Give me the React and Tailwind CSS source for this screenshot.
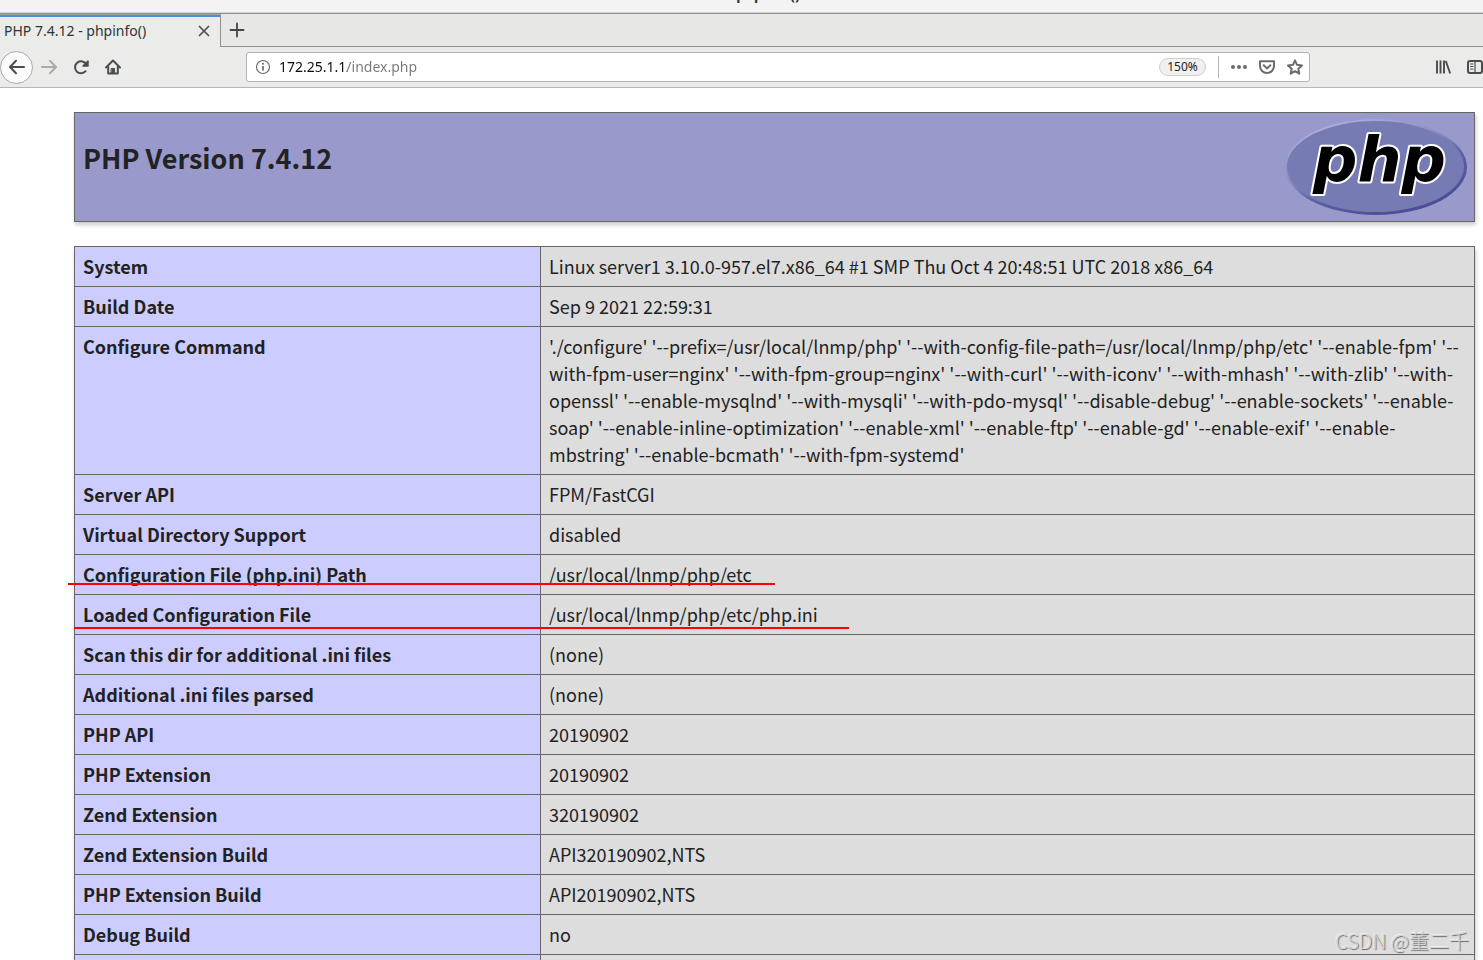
const rows = [
  ["System", "Linux server1 3.10.0-957.el7.x86_64 #1 SMP Thu Oct 4 20:48:51 UTC 2018 x86_64"],
  ["Build Date", "Sep 9 2021 22:59:31"],
  [
    "Configure Command",
    "'./configure' '--prefix=/usr/local/lnmp/php' '--with-config-file-path=/usr/local/lnmp/php/etc' '--enable-fpm' '--with-fpm-user=nginx' '--with-fpm-group=nginx' '--with-curl' '--with-iconv' '--with-mhash' '--with-zlib' '--with-openssl' '--enable-mysqlnd' '--with-mysqli' '--with-pdo-mysql' '--disable-debug' '--enable-sockets' '--enable-soap' '--enable-inline-optimization' '--enable-xml' '--enable-ftp' '--enable-gd' '--enable-exif' '--enable-mbstring' '--enable-bcmath' '--with-fpm-systemd'",
  ],
  ["Server API", "FPM/FastCGI"],
  ["Virtual Directory Support", "disabled"],
  ["Configuration File (php.ini) Path", "/usr/local/lnmp/php/etc", "-left-[7px] top-7 w-[707px]"],
  ["Loaded Configuration File", "/usr/local/lnmp/php/etc/php.ini", "-left-px top-8 w-[775px]"],
  ["Scan this dir for additional .ini files", "(none)"],
  ["Additional .ini files parsed", "(none)"],
  ["PHP API", "20190902"],
  ["PHP Extension", "20190902"],
  ["Zend Extension", "320190902"],
  ["Zend Extension Build", "API320190902,NTS"],
  ["PHP Extension Build", "API20190902,NTS"],
  ["Debug Build", "no"],
  ["", ""],
];

function Icon({ children, className = "" }) {
  return (
    <svg viewBox="0 0 16 16" className={`size-4 shrink-0 ${className}`} fill="none" stroke="currentColor" strokeWidth="2" strokeLinecap="round" strokeLinejoin="round" aria-hidden="true">
      {children}
    </svg>
  );
}

function TitleBar() {
  return (
    <div className="flex h-[13px] items-start border-b border-[#d6d6d4] bg-[#f3f3f3]">
      <div className="flex h-[5px] w-full items-end justify-center overflow-hidden pl-[53px] text-sm leading-5 font-bold text-[#2e3436]">
        <span>phpinfo()</span>
      </div>
    </div>
  );
}

function TabStrip() {
  return (
    <div className="flex h-[34px] border-t border-[#8f8f8d] bg-[#e7e7e5]">
      <div className="flex w-[221px] flex-col border-t border-r border-t-[#a5a5a3] border-r-[#8f8f8d] bg-[#ebebe9]">
        <div className="h-0.5 bg-[#4a90d9]" />
        <div className="flex items-center justify-between pt-1 pr-2 pl-1">
          <span className="text-sm leading-5 text-[#2e3436]">PHP 7.4.12 - phpinfo()</span>
          <button type="button" aria-label="Close tab" className="text-[#4b5154]">
            <Icon>
              <path d="M3.5 3.5l9 9M12.5 3.5l-9 9" strokeWidth="1.7" />
            </Icon>
          </button>
        </div>
      </div>
      <div className="flex flex-1 items-center border-b border-[#8f8f8d] pl-2">
        <button type="button" aria-label="New tab" className="text-[#3f4648]">
          <Icon>
            <path d="M8 1.5v13M1.5 8h13" strokeWidth="1.8" />
          </Icon>
        </button>
      </div>
    </div>
  );
}

function Toolbar() {
  return (
    <div className="flex h-[41px] items-center border-b border-[#b6b6b4] bg-[#ebebe9] text-[#474e52]">
      <div className="flex w-[246px] items-center">
        <button type="button" aria-label="Back" className="flex size-[33px] items-center justify-center rounded-full border border-[#a9a9a7] bg-[#fbfbfb]">
          <Icon>
            <path d="M15 8H1.5M7 1.8L1 8l6 6.2" />
          </Icon>
        </button>
        <button type="button" aria-label="Forward" className="ml-2 text-[#aaacab]">
          <Icon>
            <path d="M1 8h13.5M9 1.8L15 8l-6 6.2" />
          </Icon>
        </button>
        <button type="button" aria-label="Reload" className="ml-4">
          <Icon>
            <path d="M12.6 12.2A6 6 0 1 1 13.4 5.6" />
            <path d="M15 2v5h-5z" fill="currentColor" strokeWidth="1.5" />
          </Icon>
        </button>
        <button type="button" aria-label="Home" className="ml-4">
          <Icon>
            <path d="M1 8.5l7-7 7 7" />
            <path d="M3.2 8v6.6h9.6V8" />
            <path d="M6.5 9.5h3V14h-3z" fill="currentColor" strokeWidth="1" />
          </Icon>
        </button>
      </div>
      <div className="flex h-[30px] flex-1 items-center rounded-[3px] border border-[#b4b4b2] bg-white pl-2 text-[#6b6b6b]">
        <Icon>
          <circle cx="8" cy="8" r="6.5" strokeWidth="1.2" />
          <path d="M8 7.5v3.5" strokeWidth="1.7" />
          <circle cx="8" cy="4.8" r="1" fill="currentColor" stroke="none" />
        </Icon>
        <input
          type="text"
          aria-label="Address"
          defaultValue="172.25.1.1/index.php"
          className="ml-2 min-w-0 flex-1 bg-[linear-gradient(to_right,#0c0c0d_68px,#77777a_68px)] bg-clip-text text-sm leading-5 text-transparent outline-none"
        />
        <button type="button" className="h-[18px] w-[47px] rounded-full border border-[#cfcfcf] bg-[#f0f0f0] text-center text-xs leading-4 text-[#1c1c1c]">
          150%
        </button>
        <div className="ml-3 h-[22px] w-px bg-[#b4b4b2]" />
        <button type="button" aria-label="Page actions" className="ml-3">
          <Icon>
            <g fill="currentColor" stroke="none">
              <circle cx="2" cy="8" r="2" />
              <circle cx="8" cy="8" r="2" />
              <circle cx="14" cy="8" r="2" />
            </g>
          </Icon>
        </button>
        <button type="button" aria-label="Save to Pocket" className="ml-3">
          <Icon>
            <path d="M1 2.2h14V7a7 7 0 0 1-14 0z" />
            <path d="M4.7 6.3L8 9.4l3.3-3.1" />
          </Icon>
        </button>
        <button type="button" aria-label="Bookmark this page" className="mr-1.5 ml-3">
          <Icon>
            <path d="M8 1.3l2 4.5 5 .6-3.7 3.4 1 4.9L8 12.2l-4.3 2.5 1-4.9L1 6.4l5-.6z" />
          </Icon>
        </button>
      </div>
      <div className="ml-[125px] flex w-12 shrink-0 gap-4 overflow-hidden">
        <button type="button" aria-label="Library">
          <Icon>
            <path d="M2 1.5v13M5.5 1.5v13M9 1.5v13M10.8 2l4.4 12.5" strokeWidth="1.9" strokeLinecap="butt" />
          </Icon>
        </button>
        <button type="button" aria-label="Sidebars">
          <Icon>
            <rect x="1" y="2" width="14" height="12" rx="2" />
            <path d="M8 2v12" strokeWidth="1.2" />
            <path d="M3.5 5h2.5M3.5 7.5h2.5M3.5 10h2.5" strokeWidth="1" />
          </Icon>
        </button>
      </div>
    </div>
  );
}

function PhpLogo() {
  return (
    <svg viewBox="0 0 182 96" className="h-24 w-[182px] shrink-0" role="img" aria-label="PHP logo">
      <defs>
        <linearGradient id="rim" x1="0.2" y1="0" x2="0.8" y2="1">
          <stop offset="0" stopColor="#b4b4de" />
          <stop offset="0.45" stopColor="#8285bd" />
          <stop offset="0.6" stopColor="#5c5fa3" />
          <stop offset="1" stopColor="#484a92" />
        </linearGradient>
      </defs>
      <ellipse cx="91" cy="48" rx="91" ry="48" fill="url(#rim)" />
      <ellipse cx="90.5" cy="47.5" rx="88.5" ry="45.5" fill="#777bb3" />
      <text x="28" y="62" className="font-['DejaVu_Sans',sans-serif] text-[62px] font-bold italic" fill="#000" stroke="#fff" strokeWidth="4" strokeLinejoin="round" paintOrder="stroke">
        php
      </text>
    </svg>
  );
}

export default function App() {
  return (
    <div className="relative h-screen overflow-hidden bg-white font-['Noto_Sans',sans-serif]">
      <header>
        <TitleBar />
        <TabStrip />
        <Toolbar />
      </header>
      <main className="mr-2 ml-[74px] pt-6 font-['Noto_Sans_CJK_SC',sans-serif] text-lg leading-[27px] text-[#222]">
        <div className="flex items-start justify-between border border-[#666] bg-[#9999cc] py-1.5 pr-[7px] pl-2 shadow-[1px_3px_4px_#ccc]">
          <h1 className="mt-5 text-[27px] leading-[38px] font-bold">PHP Version 7.4.12</h1>
          <PhpLogo />
        </div>
        <table className="mt-6 w-full table-fixed border-collapse shadow-[1px_3px_4px_#ccc]">
          <colgroup>
            <col className="w-[466px]" />
            <col />
          </colgroup>
          <tbody>
            {rows.map(([name, value, mark], i) => (
              <tr key={i} className="h-10">
                <th scope="row" className="relative border border-[#666] bg-[#ccccff] px-2 py-1.5 text-left align-top font-bold">
                  {name}
                  {mark && <span className={`absolute z-10 h-0.5 bg-[#ff0000] ${mark}`} />}
                </th>
                <td className="border border-[#666] bg-[#dddddd] px-2 py-1.5 align-top">{value}</td>
              </tr>
            ))}
          </tbody>
        </table>
      </main>
      <div className="absolute right-3.5 bottom-[5px] font-['Noto_Sans_CJK_SC',sans-serif] text-xl leading-7 font-light text-[#d4d4d4] [text-shadow:1px_1px_1px_#666,-1px_-1px_0_#eee]">
        CSDN @董二千
      </div>
    </div>
  );
}
